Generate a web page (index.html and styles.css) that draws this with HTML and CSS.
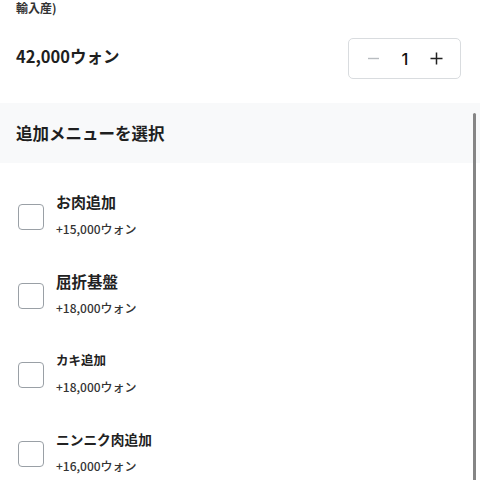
FILE: index.html
```html
<!DOCTYPE html>
<html lang="ja">
<head>
<meta charset="utf-8">
<link rel="stylesheet" href="styles.css">
</head>
<body>
<div class="top">
  <p class="origin">輸入産)</p>
  <div class="price-row">
    <span class="price">42,000ウォン</span>
    <div class="qty">
      <svg class="qbtn" viewBox="0 0 15 15" width="15" height="15"><path d="M2 7.5H13" stroke="#b8bcc0" stroke-width="1.4"/></svg>
      <span class="num">1</span>
      <svg class="qbtn" viewBox="0 0 15 15" width="15" height="15"><path d="M1.5 7.5H13.5M7.5 1.5V13.5" stroke="#222" stroke-width="1.5"/></svg>
    </div>
  </div>
</div>
<section class="options">
  <h2 class="opt-head">追加メニューを選択</h2>
  <ul class="opt-list">
    <li class="opt"><span class="box"></span><div class="opt-text"><span class="opt-name n1">お肉追加</span><span class="opt-price">+15,000ウォン</span></div></li>
    <li class="opt"><span class="box"></span><div class="opt-text"><span class="opt-name n2">屈折基盤</span><span class="opt-price">+18,000ウォン</span></div></li>
    <li class="opt"><span class="box"></span><div class="opt-text"><span class="opt-name n3">カキ追加</span><span class="opt-price">+18,000ウォン</span></div></li>
    <li class="opt"><span class="box"></span><div class="opt-text"><span class="opt-name n4">ニンニク肉追加</span><span class="opt-price">+16,000ウォン</span></div></li>
  </ul>
  <div class="scrollbar"></div>
</section>
</body>
</html>
```
FILE: styles.css
```css
html, body {
  margin: 0;
  padding: 0;
  background: #fff;
}
body {
  font-family: "Noto Sans CJK JP", "Noto Sans", sans-serif;
  color: #1f1f1f;
  width: 480px;
  height: 480px;
  overflow: hidden;
}
.top {
  padding: 1px 19px 24px 16px;
}
.origin {
  margin: 0;
  font-size: 12px;
  line-height: 14px;
  font-weight: 700;
  color: #333;
}
.price-row {
  margin-top: 23px;
  display: flex;
  justify-content: space-between;
  align-items: center;
  height: 41px;
}
.price {
  font-size: 16.5px;
  font-weight: 700;
  line-height: 20px;
  margin-top: -6px;
}
.qty {
  box-sizing: border-box;
  width: 113px;
  height: 41px;
  border: 1px solid #d9dcdf;
  border-radius: 5px;
  display: flex;
  align-items: center;
  justify-content: space-between;
  padding: 0 16px 0 17px;
}
.qbtn {
  display: block;
}
.num {
  font-size: 16.5px;
  font-family: "Inter", "Noto Sans", sans-serif;
  font-weight: 500;
  color: #111;
  line-height: 20px;
}
.options {
  position: relative;
  height: 377px;
  overflow: hidden;
}
.opt-head {
  margin: 0;
  height: 60px;
  background: #f8f9fa;
  display: flex;
  align-items: center;
  padding: 0 16px;
  font-size: 16.5px;
  font-weight: 700;
  color: #1f1f1f;
}
.opt-list {
  list-style: none;
  margin: 0;
  padding: 29px 16px 0 18px;
  display: flex;
  flex-direction: column;
  gap: 34px;
}
.opt {
  display: flex;
  align-items: flex-start;
  gap: 12px;
}
.box {
  box-sizing: border-box;
  width: 26px;
  height: 26px;
  margin-top: 12px;
  border: 1.5px solid #9aa0a6;
  border-radius: 4px;
  flex: none;
}
.opt-text {
  display: flex;
  flex-direction: column;
  gap: 9px;
}
.opt-name {
  font-weight: 700;
  line-height: 20px;
  color: #222;
}
.n1 { font-size: 15px; }
.n2 { font-size: 15.5px; }
.n3 { font-size: 12.5px; }
.n4 { font-size: 13.7px; }
.opt-price {
  font-size: 12px;
  line-height: 16px;
  font-weight: 500;
  color: #333;
}
.scrollbar {
  position: absolute;
  right: 4px;
  top: 10px;
  bottom: 0;
  width: 3px;
  border-radius: 2px 2px 0 0;
  background: #858585;
}
```
